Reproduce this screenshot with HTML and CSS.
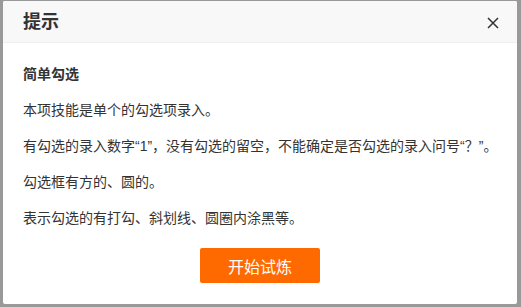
FILE: index.html
```html
<!DOCTYPE html>
<html lang="zh-CN">
<head>
    <meta charset="UTF-8">
    <meta name="viewport" content="width=device-width, initial-scale=1.0">
    <title>提示</title>
    <link rel="stylesheet" href="styles.css">
</head>
<body>
    <div class="dialog">
        <div class="dialog-header">
            <h3>提示</h3>
            <button class="close-button" aria-label="关闭">
                <svg width="12" height="12" viewBox="0 0 12 12">
                    <path d="M1 1 L11 11 M11 1 L1 11" stroke="#333" stroke-width="1.5" fill="none"/>
                </svg>
            </button>
        </div>
        <div class="dialog-body">
            <p class="subtitle">简单勾选</p>
            <p>本项技能是单个的勾选项录入。</p>
            <p>有勾选的录入数字“1”，没有勾选的留空，不能确定是否勾选的录入问号“？”。</p>
            <p>勾选框有方的、圆的。</p>
            <p>表示勾选的有打勾、斜划线、圆圈内涂黑等。</p>
            <div class="actions">
                <button class="start-button">开始试炼</button>
            </div>
        </div>
    </div>
</body>
</html>
```

FILE: styles.css
```css
body {
    margin: 0;
    background-color: #999999;
    font-family: "Liberation Sans", "Noto Sans CJK SC", sans-serif;
    color: #333333;
}
.dialog {
    width: 514px;
    height: 303px;
    margin: 1px 0 0 3px;
    background: #ffffff;
    border-radius: 2px;
    overflow: hidden;
}
.dialog-header {
    height: 41px;
    display: flex;
    align-items: center;
    justify-content: space-between;
    padding: 0 16px 0 20px;
    background-color: #f8f8f8;
    border-bottom: 1px solid #eeeeee;
}
.dialog-header h3 {
    margin: 0;
    font-size: 18px;
    font-weight: bold;
    line-height: 44px;
}
.close-button {
    width: 16px;
    height: 16px;
    padding: 0;
    border: none;
    background: none;
    display: flex;
    align-items: center;
    justify-content: center;
    cursor: pointer;
    margin-top: 2px;
}
.dialog-body {
    padding: 21px 20px 0 20px;
    font-size: 14px;
    line-height: 21px;
}
.dialog-body p {
    margin: 0 0 15px 0;
    white-space: nowrap;
}
.subtitle {
    font-weight: bold;
}
.actions {
    display: flex;
    justify-content: center;
    padding-top: 4px;
}
.start-button {
    width: 120px;
    height: 35px;
    border: none;
    border-radius: 2px;
    background-color: #ff6a00;
    color: #ffffff;
    font-family: "Liberation Sans", "Noto Sans CJK SC", sans-serif;
    font-size: 16px;
    cursor: pointer;
}
```
